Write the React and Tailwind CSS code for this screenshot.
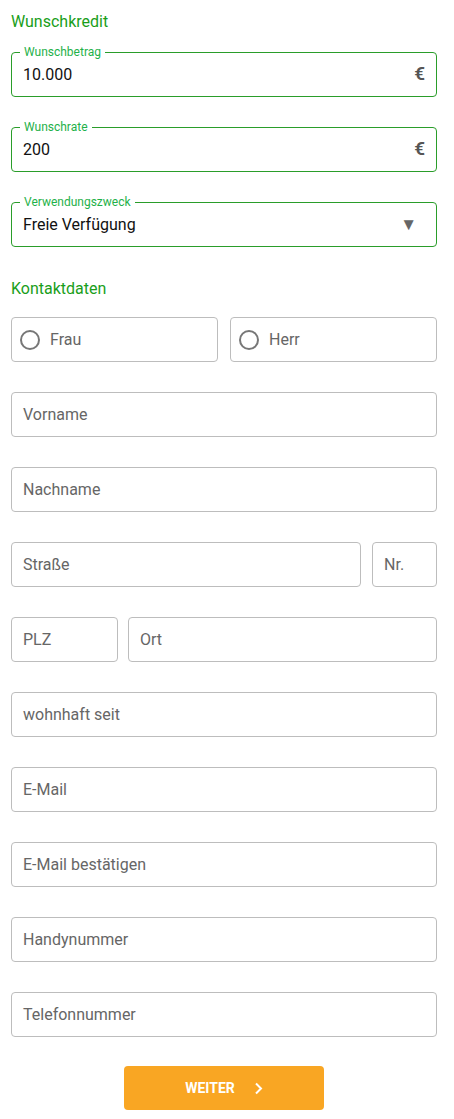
import React from "react";

const Field = ({ label, value, suffix }) => (
  <div className="relative h-[45px] rounded border border-[#2a9d2a] flex items-center px-[11px]">
    <span className="absolute left-[8px] -top-[9px] bg-white px-[4px] text-[12px] leading-[16px] text-[#1fb14a]">
      {label}
    </span>
    <span className="flex-1 text-[16px] text-[#111]">{value}</span>
    {suffix}
  </div>
);

const Input = ({ placeholder, className = "" }) => (
  <div
    className={`h-[45px] rounded border border-[#bdbdbd] flex items-center px-[11px] text-[16px] text-[#666] ${className}`}
  >
    {placeholder}
  </div>
);

const Radio = ({ label }) => (
  <label className="flex-1 h-[45px] rounded border border-[#bdbdbd] flex items-center gap-[10px] pl-[8px] text-[16px] text-[#666]">
    <span className="w-[20px] h-[20px] rounded-full border-2 border-[#777]" />
    {label}
  </label>
);

export default function App() {
  return (
    <div
      className="bg-white px-[11px] pt-[12px] pb-[9px] w-[448px]"
      style={{ fontFamily: "Roboto, 'Liberation Sans', sans-serif" }}
    >
      <h2 className="text-[16px] leading-[20px] text-[#1a9e1a]">Wunschkredit</h2>

      <div className="mt-[20px] flex flex-col gap-[30px]">
        <Field
          label="Wunschbetrag"
          value="10.000"
          suffix={<span className="text-[19px] font-semibold text-[#555]">€</span>}
        />
        <Field
          label="Wunschrate"
          value="200"
          suffix={<span className="text-[19px] font-semibold text-[#555]">€</span>}
        />
        <Field
          label="Verwendungszweck"
          value="Freie Verfügung"
          suffix={<span className="text-[17px] text-[#666] pr-[8px]">▼</span>}
        />
      </div>

      <h2 className="mt-[32px] text-[16px] leading-[20px] text-[#1a9e1a]">Kontaktdaten</h2>

      <div className="mt-[18px] flex flex-col gap-[30px]">
        <div className="flex gap-[12px]">
          <Radio label="Frau" />
          <Radio label="Herr" />
        </div>
        <Input placeholder="Vorname" />
        <Input placeholder="Nachname" />
        <div className="flex gap-[11px]">
          <Input placeholder="Straße" className="flex-1" />
          <Input placeholder="Nr." className="w-[65px]" />
        </div>
        <div className="flex gap-[10px]">
          <Input placeholder="PLZ" className="w-[107px]" />
          <Input placeholder="Ort" className="flex-1" />
        </div>
        <Input placeholder="wohnhaft seit" />
        <Input placeholder="E-Mail" />
        <Input placeholder="E-Mail bestätigen" />
        <Input placeholder="Handynummer" />
        <Input placeholder="Telefonnummer" />
      </div>

      <div className="mt-[29px] flex justify-center">
        <button className="w-[200px] h-[44px] rounded bg-[#f9a623] flex items-center justify-center gap-[19px] text-white text-[14px] font-bold">
          WEITER
          <svg width="9" height="13" viewBox="0 0 9 13" fill="none">
            <path d="M2 1.5l5 5-5 5" stroke="white" strokeWidth="2" />
          </svg>
        </button>
      </div>
    </div>
  );
}
